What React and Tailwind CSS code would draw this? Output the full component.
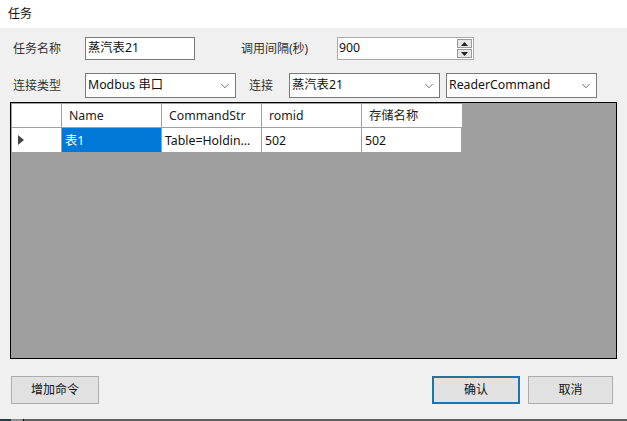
import { ChevronDown } from 'lucide-react';

const font = { fontFamily: '"Noto Sans", "Noto Sans CJK SC", sans-serif' };

function Select({ value, width }) {
  return (
    <div className={`${width} h-[25px] border border-[#7a7a7a] bg-white flex items-center justify-between pl-[2px] pr-[3px] text-[12.3px] text-[#111] leading-none`}>
      <span>{value}</span>
      <ChevronDown size={14} strokeWidth={1.2} className="text-[#333]" />
    </div>
  );
}

function HeadCell({ children, width, className = '' }) {
  return (
    <div className={`${width} h-[24px] shrink-0 pt-[2px] bg-white border-r border-b border-[#a0a0a0] flex items-center text-[12.3px] text-[#222] ${className}`}>
      {children}
    </div>
  );
}

function Cell({ children, width, selected }) {
  return (
    <div className={`${width} h-[25px] shrink-0 pt-[2px] border-r border-b border-[#a0a0a0] flex items-center pl-[3px] text-[12.3px] overflow-hidden whitespace-nowrap ${selected ? 'bg-[#0078d7] text-white' : 'bg-white text-[#111]'}`}>
      {children}
    </div>
  );
}

function Button({ children, width, primary }) {
  return (
    <button className={`${width} h-[28px] bg-[#e1e1e1] text-[12px] text-[#111] ${primary ? 'border-2 border-[#1b75ac]' : 'border border-[#adadad]'}`}>
      {children}
    </button>
  );
}

export default function App() {
  return (
    <div style={font} className="w-[627px] h-[421px] overflow-hidden bg-[#f0f0f0] flex flex-col">
      {/* title bar */}
      <div className="h-[28px] shrink-0 bg-white pl-[8px] pt-[5px] text-[12px] text-[#111]">任务</div>

      <div className="flex items-center h-[23px] mt-[9px]">
        <span className="ml-[13px] w-[72px] pt-[1px] text-[12px] text-[#333]">任务名称</span>
        <div className="w-[110px] h-[23px] border border-[#7a7a7a] bg-white pl-[2px] flex items-center text-[12.3px] text-[#111]">蒸汽表21</div>
        <span className="ml-[46px] w-[96px] pt-[1px] text-[12px] text-[#333]">调用间隔(秒)</span>
        <div className="w-[137px] h-[23px] border border-[#a9a9a9] bg-white pl-[1px] pr-[1px] flex items-center justify-between text-[12.3px] text-[#111]">
          <span>900</span>
          <div className="flex flex-col gap-[1px] w-[15px]">
            <div className="h-[9px] bg-[#e6e6e6] border border-[#9a9a9a] flex items-center justify-center">
              <svg width="7" height="4" viewBox="0 0 7 4"><path d="M3.5 0L7 4H0z" fill="#222" /></svg>
            </div>
            <div className="h-[9px] bg-[#e6e6e6] border border-[#9a9a9a] flex items-center justify-center">
              <svg width="7" height="4" viewBox="0 0 7 4"><path d="M0 0h7L3.5 4z" fill="#222" /></svg>
            </div>
          </div>
        </div>
      </div>

      <div className="flex items-center h-[25px] mt-[13px]">
        <span className="ml-[13px] w-[72px] text-[12px] text-[#333]">连接类型</span>
        <Select value="Modbus 串口" width="w-[151px]" />
        <span className="ml-[13px] w-[40px] text-[12px] text-[#333]">连接</span>
        <Select value="蒸汽表21" width="w-[151px]" />
        <div className="w-[6px]" />
        <Select value="ReaderCommand" width="w-[151px]" />
      </div>

      {/* grid */}
      <div className="ml-[10px] mt-[4px] w-[607px] h-[257px] shrink-0 border border-black bg-[#9f9f9f] p-[1px]">
        <div className="flex">
          <HeadCell width="w-[50px]" />
          <HeadCell width="w-[100px]" className="pl-[7px]">Name</HeadCell>
          <HeadCell width="w-[100px]" className="pl-[7px]">CommandStr</HeadCell>
          <HeadCell width="w-[100px]" className="pl-[7px]">romid</HeadCell>
          <HeadCell width="w-[101px]" className="pl-[7px]">存储名称</HeadCell>
        </div>
        <div className="flex">
          <div className="w-[50px] h-[25px] shrink-0 bg-white border-r border-b border-[#a0a0a0] flex items-center pl-[6px]">
            <svg width="6" height="10" viewBox="0 0 6 10"><path d="M0 0l6 5-6 5z" fill="#444" /></svg>
          </div>
          <Cell width="w-[100px]" selected>表1</Cell>
          <Cell width="w-[100px]">Table=Holdin...</Cell>
          <Cell width="w-[100px]">502</Cell>
          <Cell width="w-[100px]">502</Cell>
        </div>
      </div>

      <div className="flex mt-[17px] pl-[11px]">
        <Button width="w-[88px]">增加命令</Button>
        <div className="ml-[333px]"><Button width="w-[88px]" primary>确认</Button></div>
        <div className="ml-[8px]"><Button width="w-[85px]">取消</Button></div>
      </div>

      {/* edge of the window behind */}
      <div className="mt-[15px] h-[2px] flex">
        <div className="w-[11px] bg-[#1f3f45]" />
        <div className="w-[12px] bg-[#8a8a8a]" />
        <div className="w-[1px] bg-black" />
        <div className="flex-1 bg-[#5f5f5f]" />
      </div>
    </div>
  );
}
